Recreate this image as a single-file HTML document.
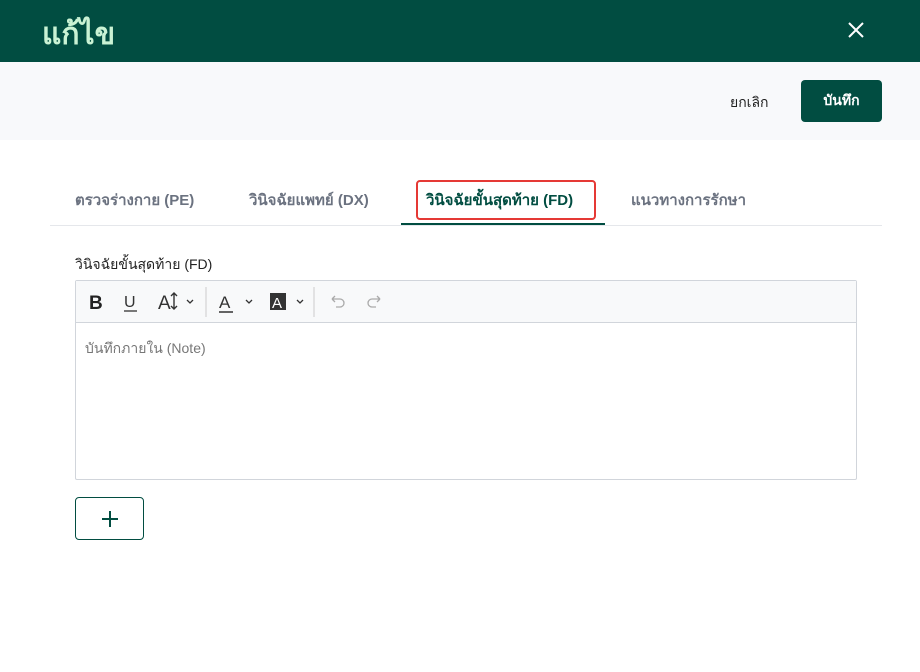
<!DOCTYPE html>
<html><head><meta charset="utf-8"><style>
*{margin:0;padding:0;box-sizing:border-box}
body{width:920px;height:672px;background:#fff;font-family:"Liberation Sans","DejaVu Sans",sans-serif;position:relative;overflow:hidden}
.hdr{position:absolute;left:0;top:0;width:920px;height:62px;background:#014d41}
.title{position:absolute;left:42px;top:11px;font-size:30px;color:#c9f2d4;font-weight:bold}
.bar{position:absolute;left:0;top:62px;width:920px;height:78px;background:#f8f9fb}
.cancel{position:absolute;left:730px;top:92px;font-size:14px;color:#222}
.save{position:absolute;left:801px;top:80px;width:81px;height:42px;background:#014d41;border-radius:4px;color:#fff;font-size:14px;font-weight:bold;text-align:center;line-height:41px}
.tab{position:absolute;top:188px;font-size:15px;color:#6b7280;font-weight:bold}
.tabline{position:absolute;left:50px;top:225px;width:832px;height:1px;background:#e5e7eb}
.active{position:absolute;left:401px;top:223px;width:204px;height:2px;background:#014d41}
.redbox{position:absolute;left:416px;top:180px;width:180px;height:40px;border:2px solid #e53935;border-radius:4px}
.lbl{position:absolute;left:75px;top:254px;font-size:14px;color:#222}
.editor{position:absolute;left:75px;top:280px;width:782px;height:200px;border:1px solid #d1d5db;border-radius:2px}
.tb{height:42px;background:#f8f9fa;border-bottom:1px solid #d1d5db;position:relative}
.ph{position:absolute;left:9px;top:57px;font-size:14px;color:#777}
.plus{position:absolute;left:75px;top:497px;width:69px;height:43px;border:1px solid #014d41;border-radius:4px}
</style></head><body>
<div class="hdr"><div class="title">แก้ไข</div>
<svg style="position:absolute;left:847px;top:21px" width="18" height="18"><path d="M2 2L16 16M16 2L2 16" stroke="#fff" stroke-width="2"/></svg></div>
<div class="bar"></div>
<div class="cancel">ยกเลิก</div>
<div class="save">บันทึก</div>
<div class="tab" style="left:75px">ตรวจร่างกาย (PE)</div>
<div class="tab" style="left:249px">วินิจฉัยแพทย์ (DX)</div>
<div class="tab" style="left:426px;color:#014d41">วินิจฉัยขั้นสุดท้าย (FD)</div>
<div class="tab" style="left:631px">แนวทางการรักษา</div>
<div class="tabline"></div><div class="active"></div><div class="redbox"></div>
<div class="lbl">วินิจฉัยขั้นสุดท้าย (FD)</div>
<div class="editor"><div class="tb">
<svg width="330" height="42" style="position:absolute;left:0;top:0">
<text x="13" y="28" font-family="Liberation Sans" font-weight="bold" font-size="19" fill="#222">B</text>
<text x="48" y="26" font-family="Liberation Sans" font-size="16" fill="#333">U</text><line x1="48" y1="30" x2="61" y2="30" stroke="#333" stroke-width="1.3"/>
<text x="82" y="28" font-family="Liberation Sans" font-size="19" fill="#333">A</text><path d="M98 12v16M95 15l3-3 3 3M95 25l3 3 3-3" stroke="#333" fill="none" stroke-width="1.4"/>
<path d="M111 19l3 3 3-3" stroke="#333" fill="none" stroke-width="1.3"/>
<line x1="130" y1="6" x2="130" y2="36" stroke="#ccc"/>
<text x="143" y="27" font-family="Liberation Sans" font-size="17" fill="#333">A</text><line x1="143" y1="31" x2="157" y2="31" stroke="#333" stroke-width="1.5"/>
<path d="M170 19l3 3 3-3" stroke="#333" fill="none" stroke-width="1.3"/>
<rect x="194" y="12" width="16" height="17" fill="#333"/><text x="196" y="27" font-family="Liberation Sans" font-size="15" fill="#fff">A</text>
<path d="M221 19l3 3 3-3" stroke="#333" fill="none" stroke-width="1.3"/>
<line x1="238" y1="6" x2="238" y2="36" stroke="#ccc"/>
<path d="M256 18h8a4 4 0 0 1 0 8h-4M256 18l3-3M256 18l3 3" stroke="#aaa" fill="none" stroke-width="1.3"/>
<path d="M304 18h-8a4 4 0 0 0 0 8h4M304 18l-3-3M304 18l-3 3" stroke="#aaa" fill="none" stroke-width="1.3"/>
</svg></div>
<div class="ph">บันทึกภายใน (Note)</div></div>
<div class="plus"><svg width="67" height="41"><path d="M34 13v16M26 21h16" stroke="#014d41" stroke-width="2"/></svg></div>
</body></html>
